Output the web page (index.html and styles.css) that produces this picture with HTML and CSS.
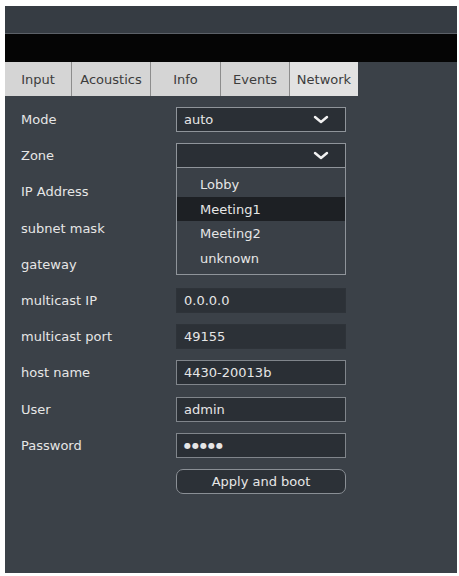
FILE: index.html
```html
<!DOCTYPE html>
<html lang="en">
<head>
    <meta charset="UTF-8">
    <meta name="viewport" content="width=device-width, initial-scale=1.0">
    <title>Network settings</title>
    <link rel="stylesheet" href="styles.css">
</head>
<body>
    <div class="panel">
        <div class="titlebar"></div>
        <div class="blackbar"></div>

        <div class="tabs">
            <div class="tab" style="width: 67px">Input</div>
            <div class="tab" style="width: 79px">Acoustics</div>
            <div class="tab" style="width: 70px">Info</div>
            <div class="tab" style="width: 69px">Events</div>
            <div class="tab active" style="width: 68px">Network</div>
        </div>

        <div class="form">
            <div class="label">Mode</div>
            <div class="select">
                <span>auto</span>
                <svg class="chevron" width="16" height="9" viewBox="0 0 16 9"><path d="M2 2 L8 7 L14 2" fill="none" stroke="#f2f2f2" stroke-width="2.4" stroke-linecap="round" stroke-linejoin="round"/></svg>
            </div>

            <div class="label">Zone</div>
            <div class="select">
                <span></span>
                <svg class="chevron" width="16" height="9" viewBox="0 0 16 9"><path d="M2 2 L8 7 L14 2" fill="none" stroke="#f2f2f2" stroke-width="2.4" stroke-linecap="round" stroke-linejoin="round"/></svg>
                <div class="dropdown">
                    <div class="option">Lobby</div>
                    <div class="option selected">Meeting1</div>
                    <div class="option">Meeting2</div>
                    <div class="option">unknown</div>
                </div>
            </div>

            <div class="label">IP Address</div>
            <div class="field covered"></div>

            <div class="label">subnet mask</div>
            <div class="field covered"></div>

            <div class="label">gateway</div>
            <div class="field covered"></div>

            <div class="label">multicast IP</div>
            <div class="field readonly">0.0.0.0</div>

            <div class="label">multicast port</div>
            <div class="field readonly">49155</div>

            <div class="label">host name</div>
            <div class="field">4430-20013b</div>

            <div class="label">User</div>
            <div class="field">admin</div>

            <div class="label">Password</div>
            <div class="field password">&#9679;&#9679;&#9679;&#9679;&#9679;</div>

            <div></div>
            <button class="apply">Apply and boot</button>
        </div>
    </div>
</body>
</html>
```

FILE: styles.css
```css
body {
    margin: 0;
    background: #ffffff;
    font-family: "DejaVu Sans", Verdana, sans-serif;
}
.panel {
    margin: 6px 2px 0 5px;
    height: 567px;
    background: #3b4148;
    display: flex;
    flex-direction: column;
}
.titlebar {
    height: 27px;
    background: #363c43;
    border-bottom: 1px solid #5c6168;
}
.blackbar {
    height: 28px;
    background: #050505;
}
.tabs {
    display: flex;
    height: 34px;
}
.tab {
    box-sizing: border-box;
    background: #d5d5d5;
    border-right: 1px solid #8d8d8d;
    color: #3c3c3c;
    font-size: 13px;
    display: flex;
    align-items: center;
    justify-content: center;
}
.tab.active {
    background: #e2e2e2;
    border-right: none;
}
.form {
    display: grid;
    grid-template-columns: 155px 170px;
    grid-auto-rows: 25px;
    row-gap: 11.2px;
    padding: 11px 0 0 16px;
    color: #e6e6e6;
    font-size: 13px;
}
.label {
    display: flex;
    align-items: center;
}
.select, .field {
    box-sizing: border-box;
    background: #2a2f35;
    border: 1px solid #80858b;
    display: flex;
    align-items: center;
    padding: 0 7px;
}
.select {
    position: relative;
    justify-content: space-between;
    border-color: #8f949a;
    padding-right: 16px;
}
.field.covered {
    visibility: hidden;
}
.field.readonly {
    border-color: #2e3339;
    background: #2c3137;
}
.password {
    font-size: 8px;
    letter-spacing: 1px;
}
.dropdown {
    position: absolute;
    top: 100%;
    left: -1px;
    width: 170px;
    box-sizing: border-box;
    padding: 4px 0 3px;
    background: #3a4047;
    border: 1px solid #8f949a;
    z-index: 2;
}
.option {
    height: 24.6px;
    display: flex;
    align-items: center;
    padding-left: 23px;
}
.option.selected {
    background: #1d2024;
}
.apply {
    box-sizing: border-box;
    background: #2c3137;
    border: 1px solid #8a8f95;
    border-radius: 7px;
    color: #e6e6e6;
    font-family: inherit;
    font-size: 13px;
    padding: 0;
}
```
